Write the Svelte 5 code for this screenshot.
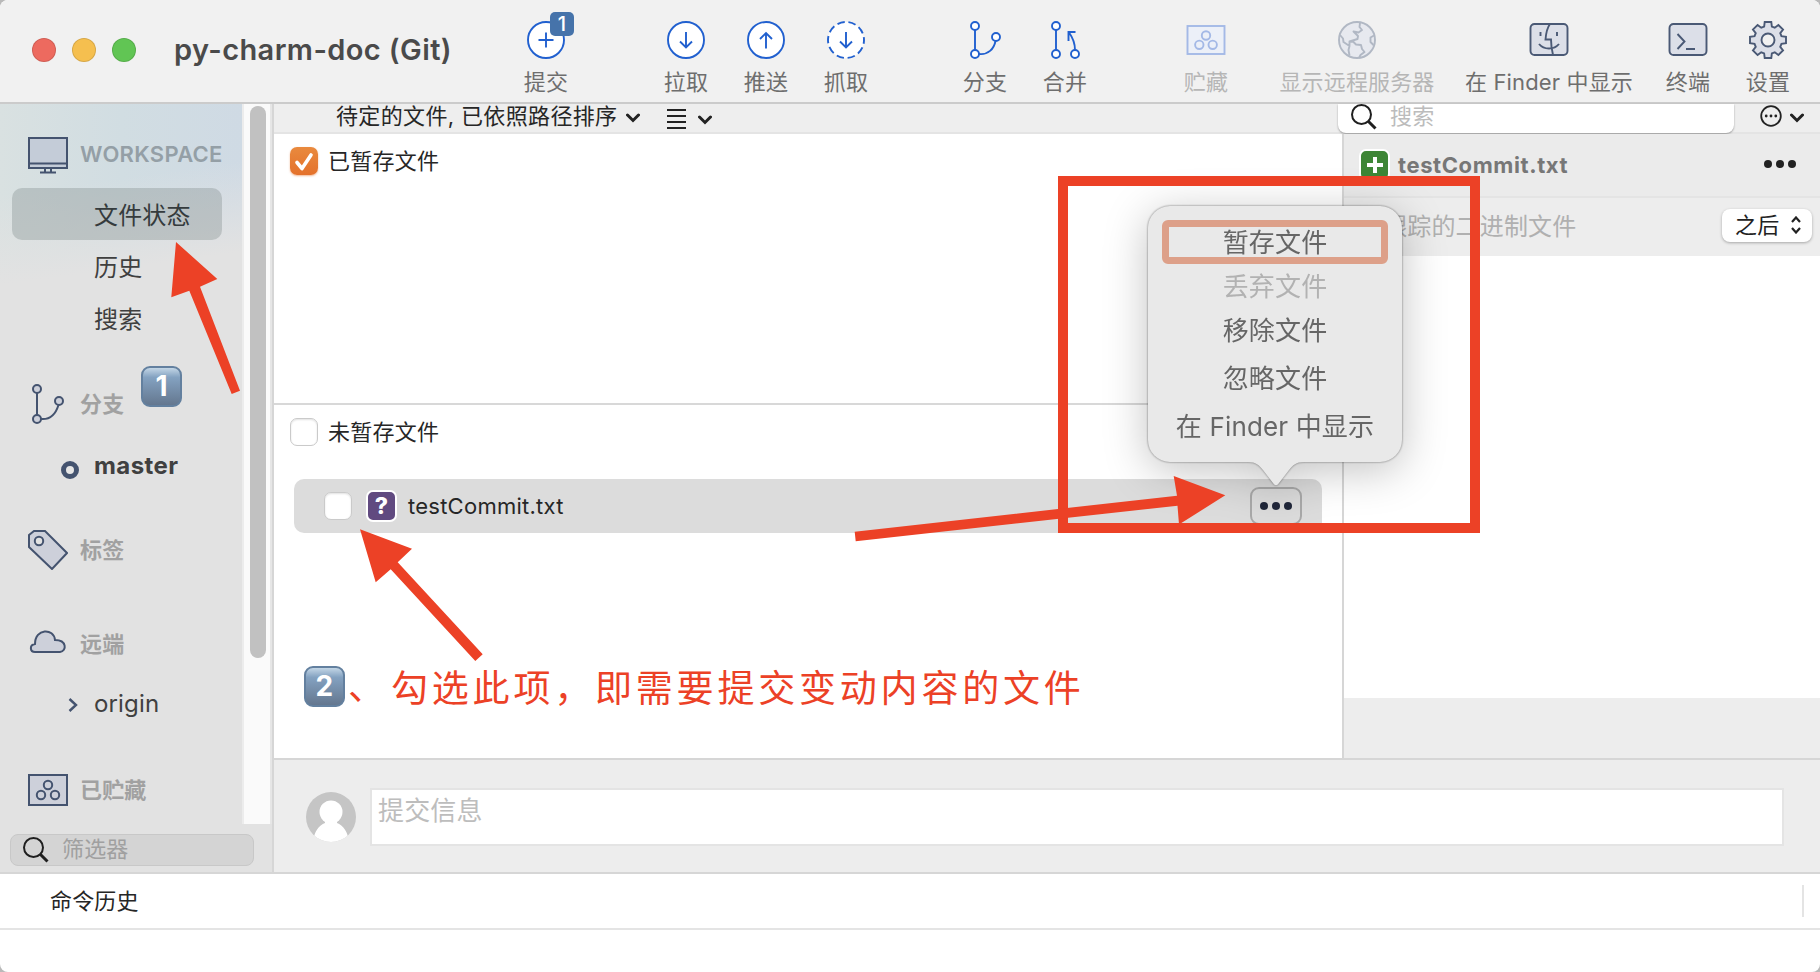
<script lang="ts">
  type Tool = { icon: string; label: string; width: number; disabled?: boolean };

  const toolGroups: { name: string; tools: Tool[] }[] = [
    { name: 'commit', tools: [{ icon: 'commit', label: '提交', width: 80 }] },
    {
      name: 'sync',
      tools: [
        { icon: 'pull', label: '拉取', width: 80 },
        { icon: 'push', label: '推送', width: 80 },
        { icon: 'fetch', label: '抓取', width: 80 }
      ]
    },
    {
      name: 'branching',
      tools: [
        { icon: 'branch', label: '分支', width: 80 },
        { icon: 'merge', label: '合并', width: 80 }
      ]
    },
    { name: 'stash', tools: [{ icon: 'stash', label: '贮藏', width: 80, disabled: true }] },
    {
      name: 'system',
      tools: [
        { icon: 'remote', label: '显示远程服务器', width: 170, disabled: true },
        { icon: 'finder', label: '在 Finder 中显示', width: 214 },
        { icon: 'terminal', label: '终端', width: 64 },
        { icon: 'settings', label: '设置', width: 96 }
      ]
    }
  ];

  const menuItems = ['丢弃文件', '移除文件', '忽略文件', '在 Finder 中显示'];

  let selected = $state('文件状态');
  let stagedChecked = $state(true);

  // Gear outline: eight teeth around the centre of a 40x40 box
  function gearPath() {
    const points: string[] = [];
    for (let i = 0; i < 8; i++) {
      const a = (i * Math.PI) / 4 - Math.PI / 2;
      const tooth = [
        [-0.28, 14],
        [-0.18, 18.3],
        [0.18, 18.3],
        [0.28, 14]
      ];
      for (const [d, r] of tooth) {
        points.push(`${(20 + r * Math.cos(a + d)).toFixed(2)} ${(20 + r * Math.sin(a + d)).toFixed(2)}`);
      }
    }
    return 'M' + points.join('L') + 'Z';
  }
</script>

{#snippet icon(name: string)}
  <svg class="icon {name}" viewBox="0 0 40 40" width="40" height="40">
    {#if name === 'commit'}
      <circle cx="20" cy="20" r="18" />
      <path d="M20 12.500v15M12.500 20h15" />
    {:else if name === 'pull'}
      <circle cx="20" cy="20" r="18" />
      <path d="M20 12v15.500M14 21.500l6 6 6-6" />
    {:else if name === 'push'}
      <circle cx="20" cy="20" r="18" />
      <path d="M20 28.500V13M14 19l6-6 6 6" />
    {:else if name === 'fetch'}
      <circle cx="20" cy="20" r="18" stroke-dasharray="7.500 3.810" stroke-dashoffset="3.700" />
      <path d="M20 12v15.500M14 21.500l6 6 6-6" />
    {:else if name === 'branch'}
      <path d="M10 10v20M14 34c9 1 15-5 16.500-13" />
      <circle cx="10" cy="6" r="4" />
      <circle cx="10" cy="34" r="4" />
      <circle cx="31" cy="17" r="4" />
    {:else if name === 'merge'}
      <path d="M11 10v20M30 30c0-7-2-12-6-17.500M23.500 21v-9h7" />
      <circle cx="11" cy="6" r="4" />
      <circle cx="11" cy="34" r="4" />
      <circle cx="30" cy="34" r="4" />
    {:else if name === 'stash'}
      <rect x="1.500" y="6" width="37" height="28" />
      <circle cx="20" cy="15.500" r="4.200" />
      <circle cx="13.300" cy="24.800" r="4.200" />
      <circle cx="26.700" cy="24.800" r="4.200" />
    {:else if name === 'remote'}
      <circle cx="20" cy="20" r="18" />
      <path d="M23 3l-.5 4 2.500 3-3.500 2.500-5-1 4.500 4.500-.5 3-8 2.500v4M3 15l3 3.500.5 3.500 6 4-1 4 1 5.500M12 22l4-.5 3 3 5 .5 1 4 2.500 3-4 3-1.500 3M37 15.500l-3.500 2 0 4.500 3 3" />
    {:else if name === 'finder'}
      <rect x="1.500" y="4" width="37" height="31" rx="4" />
      <path d="M21 4c-3 4-4 9-4.500 15.500h5.500c0 6 1 11 2 15.500M11.500 12v4M28 12v4M10 24c5 6 15 6 20 0" />
    {:else if name === 'terminal'}
      <rect x="1.500" y="4" width="37" height="31" rx="4" />
      <path d="M9.500 14l7 7.500-7 7.500M18 29h9" />
    {:else if name === 'settings'}
      <path d={gearPath()} />
      <circle cx="20" cy="20" r="6.500" class="hole" />
    {/if}
  </svg>
{/snippet}

{#snippet magnifier()}
  <svg class="magnifier" viewBox="0 0 26 26" width="26" height="26">
    <circle cx="10.500" cy="10.500" r="9.500" />
    <path class="handle" d="M17.500 17.500l7 7" />
  </svg>
{/snippet}

{#snippet chevron()}
  <svg class="chevron" viewBox="0 0 14 10" width="14" height="10"><path d="M1.500 2l5.500 5.500L12.500 2" /></svg>
{/snippet}

{#snippet keycap(n: number)}
  <span class="keycap">{n}</span>
{/snippet}

<div class="window">
  <header class="toolbar">
    <div class="title-area">
      <span class="light red"></span>
      <span class="light yellow"></span>
      <span class="light green"></span>
      <h1>py-charm-doc (Git)</h1>
    </div>
    {#each toolGroups as group}
      <div class="tool-group {group.name}-group">
        {#each group.tools as tool}
          <div class="tool" class:disabled={tool.disabled} style="width: {tool.width}px">
            {@render icon(tool.icon)}
            <span>{tool.label}</span>
            {#if tool.icon === 'commit'}<b class="count">1</b>{/if}
          </div>
        {/each}
      </div>
    {/each}
  </header>

  <div class="body">
    <aside class="sidebar">
      <div class="sidebar-top">
        <nav>
          <div class="heading workspace">
            <svg viewBox="0 0 40 44" width="40" height="44">
              <rect x="1" y="5" width="38" height="30" />
              <path d="M1 30.500h38M17 35v4M23 35v4M12 39.500h16" />
            </svg>
            WORKSPACE
          </div>
          {#each ['文件状态', '历史', '搜索'] as item}
            <button class="nav-item" class:active={selected === item} onclick={() => (selected = item)}>{item}</button>
          {/each}

          <div class="heading branches">
            <svg viewBox="0 0 40 40" width="40" height="40">
              <path class="line" d="M9 9v22M13 35c10 1 15-6 17.500-14" />
              <circle cx="9" cy="5" r="4" />
              <circle cx="9" cy="35" r="4" />
              <circle cx="31" cy="17" r="4" />
            </svg>
            分支
          </div>
          <div class="leaf master"><i class="ring"></i>master</div>

          <div class="heading tags">
            <svg viewBox="0 0 40 40" width="40" height="40">
              <path d="M1 5l5-4h11l22 22-15 16L1 17z" />
              <circle cx="11" cy="11" r="4.200" class="hole" />
            </svg>
            标签
          </div>
          <div class="heading remotes">
            <svg viewBox="0 0 40 40" width="40" height="40">
              <path d="M7 31c-5 0-6-7 0-8 0-16 19-16 20-4 12 0 12 11 5 12z" />
            </svg>
            远端
          </div>
          <div class="leaf origin">
            <svg viewBox="0 0 10 16" width="10" height="16"><path d="M1.500 2l6.500 6-6.500 6" /></svg>origin
          </div>
          <div class="heading stashes">
            <svg viewBox="0 0 40 40" width="40" height="40">
              <rect x="1" y="5" width="38" height="30" />
              <circle cx="20" cy="15" r="4.200" />
              <circle cx="13" cy="25" r="4.200" />
              <circle cx="27" cy="25" r="4.200" />
            </svg>
            已贮藏
          </div>
        </nav>
        <div class="scrollbar"><div class="thumb"></div></div>
      </div>
      <div class="filter">{@render magnifier()}<span>筛选器</span></div>
    </aside>

    <main>
      <div class="sortbar">
        <span class="sort">待定的文件, 已依照路径排序</span>
        {@render chevron()}
        <i class="lines"></i>
        {@render chevron()}
        <div class="search">{@render magnifier()}<span>搜索</span></div>
        <svg class="more-circle" viewBox="0 0 22 22" width="22" height="22">
          <circle cx="11" cy="11" r="9.800" class="outline" />
          <circle cx="6.200" cy="11" r="1.400" />
          <circle cx="11" cy="11" r="1.400" />
          <circle cx="15.800" cy="11" r="1.400" />
        </svg>
        {@render chevron()}
      </div>

      <div class="panes">
        <div class="files">
          <section class="staged">
            <div class="pane-title">
              <button class="check" class:checked={stagedChecked} aria-label="staged" onclick={() => (stagedChecked = !stagedChecked)}>
                {#if stagedChecked}
                  <svg viewBox="0 0 28 28" width="28" height="28"><path d="M7 15.500l5 6L21 8" /></svg>
                {/if}
              </button>
              已暂存文件
            </div>
          </section>
          <section class="unstaged">
            <div class="pane-title"><span class="check"></span>未暂存文件</div>
            <div class="file-row">
              <span class="check"></span>
              <span class="badge unknown">?</span>
              <span class="name">testCommit.txt</span>
              <button class="more" aria-label="more"><i></i><i></i><i></i></button>
            </div>
          </section>
        </div>

        <div class="diff">
          <div class="diff-head">
            <span class="badge added"></span>
            <b>testCommit.txt</b>
            <div class="dots"><i></i><i></i><i></i></div>
          </div>
          <div class="diff-info">
            <span>未跟踪的二进制文件</span>
            <div class="select">
              之后
              <svg viewBox="0 0 10 18" width="10" height="18"><path d="M1 6l4-4.500L9 6M1 12l4 4.500L9 12" /></svg>
            </div>
          </div>
          <div class="diff-body"></div>
          <div class="diff-foot"></div>
        </div>
      </div>

      <div class="commit-bar">
        <svg class="avatar" viewBox="0 0 50 50" width="50" height="50">
          <defs><clipPath id="face"><circle cx="25" cy="25" r="25" /></clipPath></defs>
          <g clip-path="url(#face)">
            <rect width="50" height="50" fill="#c5c5c5" />
            <circle cx="25" cy="20" r="11.500" fill="#fff" />
            <path d="M19 28h12v3c6 2 11 9 12 19H7c1-10 6-17 12-19z" fill="#fff" />
          </g>
        </svg>
        <div class="message">提交信息</div>
      </div>
    </main>
  </div>

  <footer>
    <div class="history">命令历史<i></i></div>
  </footer>

  <!-- File actions popover -->
  <div class="popover">
    <button class="focused">暂存文件</button>
    {#each menuItems as item, i}
      <button disabled={i === 0}>{item}</button>
    {/each}
    <svg class="tail" viewBox="0 0 56 26" width="56" height="26">
      <path d="M0 0v1C8 1 11 4 15 9l10 13c2 3 4 3 6 0L41 9C45 4 48 1 56 1V0z" />
    </svg>
  </div>

  <!-- Hand-drawn notes over the window -->
  <div class="frame"></div>
  <svg class="arrows" viewBox="0 0 1820 972" width="1820" height="972">
    <path d="M176 242l41.300 37-17.300 7.700 40 104-8.300 3.300-42.400-103.300-18 6.600z" />
    <path d="M360 529.300l52 19.400-14.300 13.600 85 92-7.400 6.700-84.600-91.700-15 13z" />
    <path d="M1225.300 495.300l-51.600-19.300 3.300 19.700-322.300 36 1 9.600 321.800-35.600 1.500 18.800z" />
  </svg>
  <div class="note one">{@render keycap(1)}</div>
  <div class="note two">{@render keycap(2)}<span class="comma">、</span><span class="words">勾选此项，即需要提交变动内容的文件</span></div>
</div>

<style>
  :global(body) {
    background: #b9b9b9;
    overflow: hidden;
  }

  * {
    box-sizing: border-box;
  }

  .window {
    position: relative;
    display: flex;
    flex-direction: column;
    width: 1820px;
    height: 972px;
    overflow: hidden;
    border-radius: 8px;
    background: #fff;
    font-family: Inter, "Noto Sans CJK SC", sans-serif;
    font-size: 22px;
    line-height: 1.2;
    letter-spacing: 0.15px;
    color: #262626;
  }

  button {
    font: inherit;
    letter-spacing: inherit;
    color: inherit;
    border: none;
    background: none;
    padding: 0;
  }

  svg {
    display: block;
    flex: none;
    fill: none;
  }

  /* Toolbar */
  .toolbar {
    display: flex;
    height: 104px;
    flex: none;
    background: #f1f1f1;
    border-bottom: 2px solid #cbcbcb;
  }

  .title-area {
    display: flex;
    align-items: center;
    width: 506px;
    padding: 0 0 2px 32px;
    gap: 16px;
  }

  .light {
    width: 24px;
    height: 24px;
    border-radius: 50%;
    border: 1px solid rgba(0, 0, 0, 0.12);
  }

  .red { background: #ed6a5f; }
  .yellow { background: #f5bf4f; }
  .green { background: #61c554; }

  h1 {
    margin: 0 0 0 22px;
    font-size: 29px;
    font-weight: 600;
    letter-spacing: 0.4px;
    color: #4a4a4a;
    white-space: nowrap;
  }

  .tool-group {
    display: flex;
  }

  .sync-group { margin-left: 60px; }
  .branching-group { margin-left: 59px; }
  .stash-group { margin-left: 61px; }
  .system-group { margin-left: 26px; }

  .tool {
    position: relative;
    display: flex;
    flex-direction: column;
    align-items: center;
    padding-top: 20px;
    color: #6e6e6e;
    white-space: nowrap;
  }

  .tool span {
    margin-top: 6px;
    line-height: 32px;
  }

  .tool.disabled span {
    color: #b6b6b6;
  }

  .icon {
    stroke: #2160cf;
    stroke-width: 1.9;
    fill: none;
  }

  .icon circle {
    fill: #fff;
  }

  .icon.stash {
    stroke: #a4b9e6;
  }

  .icon.stash rect,
  .icon.stash circle {
    fill: #ecf0f8;
  }

  .icon.remote {
    stroke: #b1b8c4;
    stroke-linejoin: round;
  }

  .icon.remote circle {
    fill: #e7e9ef;
  }

  .icon.finder,
  .icon.terminal,
  .icon.settings {
    stroke: #4a5975;
  }

  .icon.finder rect,
  .icon.terminal rect,
  .icon.settings path {
    fill: #dcdfe8;
  }

  .icon.settings .hole {
    fill: #f1f1f1;
  }

  .count {
    position: absolute;
    left: 44px;
    top: 12px;
    width: 24px;
    height: 24px;
    border-radius: 5px;
    background: #4673aa;
    color: #fff;
    font-size: 20px;
    font-weight: 500;
    line-height: 24px;
    text-align: center;
  }

  /* Sidebar */
  .body {
    display: flex;
    height: 768px;
    flex: none;
  }

  .sidebar {
    display: flex;
    flex-direction: column;
    width: 274px;
    border-right: 2px solid #d6d6d6;
    background: #e2e2e2;
  }

  .sidebar-top {
    display: flex;
    height: 720px;
  }

  nav {
    width: 242px;
    background:
      linear-gradient(172deg, rgba(226, 226, 226, 0) 90px, #e2e2e2 180px),
      linear-gradient(to right, #d9e1e1, #d1dde2 50%, #cfdae4);
  }

  .heading {
    display: flex;
    align-items: center;
    height: 60px;
    padding-left: 28px;
    gap: 12px;
    font-weight: 700;
    color: #a1a1a1;
  }

  .heading svg {
    stroke: #44536f;
    stroke-width: 2;
    fill: #cdd0da;
  }

  .heading svg .line {
    fill: none;
  }

  .heading svg .hole {
    fill: #e2e2e2;
  }

  .workspace {
    height: 84px;
    padding-top: 17px;
    color: #949fa6;
    font-weight: 600;
    letter-spacing: 0.3px;
  }

  .workspace svg {
    fill: #c4ccd8;
  }

  .nav-item {
    display: block;
    width: 210px;
    height: 52px;
    margin-left: 12px;
    padding: 3px 0 0 82px;
    border-radius: 10px;
    font-size: 24px;
    line-height: 49px;
    text-align: left;
    color: #3f3f3f;
  }

  .nav-item.active {
    background: rgba(130, 140, 140, 0.36);
    color: #353b3d;
  }

  .branches { margin-top: 30px; }

  .leaf {
    display: flex;
    align-items: center;
    height: 52px;
    padding-bottom: 3px;
    font-size: 24px;
    color: #404040;
  }

  .master {
    margin-top: 8px;
    padding-left: 61px;
    gap: 15px;
    font-weight: 700;
    letter-spacing: 0.4px;
  }

  .ring {
    width: 18px;
    height: 18px;
    margin-top: 6px;
    border: 5px solid #44536f;
    border-radius: 50%;
    background: #e6e6e6;
  }

  .tags { margin-top: 26px; }
  .remotes { margin-top: 34px; }

  .remotes svg {
    margin-top: -6px;
  }

  .origin {
    margin-top: 6px;
    padding-left: 68px;
    gap: 16px;
  }

  .origin svg {
    stroke: #44536f;
    stroke-width: 2.4;
  }

  .stashes { margin-top: 28px; }

  .scrollbar {
    width: 30px;
    padding: 2px 0 0 6px;
    background: #fafafa;
    border-left: 2px solid #ececec;
    border-right: 2px solid #e6e6e6;
  }

  .thumb {
    width: 16px;
    height: 552px;
    border-radius: 8px;
    background: #c1c1c1;
  }

  .magnifier {
    stroke: #1f1f1f;
    stroke-width: 2;
  }

  .magnifier .handle {
    stroke-width: 3;
  }

  .filter {
    display: flex;
    align-items: center;
    width: 244px;
    height: 32px;
    margin: 10px 0 0 10px;
    padding: 0 0 1px 12px;
    gap: 13px;
    border: 1px solid #c8c8c8;
    border-radius: 8px;
    background: #d4d4d4;
    color: #a0a0a0;
  }

  /* Main area */
  main {
    display: flex;
    flex-direction: column;
    width: 1546px;
  }

  .sortbar {
    display: flex;
    align-items: center;
    height: 30px;
    padding-left: 62px;
    background: #eee;
    border-bottom: 2px solid #e4e4e4;
    white-space: nowrap;
  }

  .sort {
    width: 290px;
    line-height: 26px;
    margin-top: -4px;
    letter-spacing: 0.35px;
  }

  .chevron {
    stroke: #222;
    stroke-width: 3;
    stroke-linecap: round;
  }

  .lines {
    width: 19px;
    height: 20px;
    margin: 2px 12px 0 27px;
    background: repeating-linear-gradient(#222 0 2px, transparent 2px 6px);
  }

  .lines + .chevron {
    margin-top: 4px;
  }

  .search {
    display: flex;
    align-items: center;
    width: 396px;
    height: 29px;
    margin-left: 626px;
    padding: 0 0 3px 13px;
    gap: 13px;
    border-radius: 0 0 8px 8px;
    background: #fff;
    box-shadow: 0 1px 2px rgba(0, 0, 0, 0.35);
    color: #bcbcbc;
  }

  .more-circle {
    margin: -4px 8px 0 26px;
    fill: #222;
  }

  .more-circle .outline {
    fill: none;
    stroke: #222;
    stroke-width: 1.8;
  }

  .panes {
    display: flex;
    height: 624px;
  }

  .files {
    width: 1070px;
    border-right: 2px solid #d6d6d6;
  }

  .staged {
    height: 271px;
    padding-top: 13px;
    border-bottom: 2px solid #d8d8d8;
  }

  .unstaged {
    padding-top: 13px;
  }

  .pane-title {
    display: flex;
    align-items: center;
    height: 28px;
    padding-left: 16px;
    gap: 10px;
    letter-spacing: 0.25px;
  }

  .check {
    width: 28px;
    height: 28px;
    flex: none;
    border: 1px solid #cacaca;
    border-radius: 7px;
    background: #fff;
    box-shadow: inset 0 1px 2px rgba(0, 0, 0, 0.12);
  }

  .check.checked {
    border: none;
    background: linear-gradient(#e98a3e, #e4712b);
    box-shadow: 0 1px 2px rgba(228, 113, 43, 0.5);
  }

  .check.checked svg {
    stroke: #fff;
    stroke-width: 3.6;
    stroke-linecap: round;
    stroke-linejoin: round;
  }

  .file-row {
    display: flex;
    align-items: center;
    width: 1028px;
    height: 54px;
    margin: 33px 0 0 20px;
    padding-left: 30px;
    border-radius: 10px;
    background: #dcdcdc;
  }

  .badge {
    width: 31px;
    height: 32px;
    flex: none;
    border: 2px solid #fff;
    border-radius: 7px;
    color: #fff;
    font-size: 23px;
    font-weight: 800;
    line-height: 28px;
    text-align: center;
  }

  .unknown {
    margin: 0 11px 0 14px;
    background: #614a80;
  }

  .name {
    width: 842px;
    letter-spacing: 0.25px;
  }

  .more {
    display: flex;
    align-items: center;
    justify-content: center;
    gap: 4px;
    width: 52px;
    height: 38px;
    border: 2px solid #a9a9a9;
    border-radius: 9px;
  }

  .more i,
  .dots i {
    width: 8px;
    height: 8px;
    border-radius: 50%;
    background: #20273a;
  }

  .diff {
    display: flex;
    flex-direction: column;
    flex: 1;
  }

  .diff-head {
    display: flex;
    align-items: center;
    height: 64px;
    padding: 0 24px 0 15px;
    background: #ebebeb;
    border-bottom: 2px solid #e4e4e4;
    color: #777;
  }

  .diff-head b {
    flex: 1;
    margin: 1px 0 0 8px;
    font-weight: 700;
    letter-spacing: 0.6px;
  }

  .added {
    background:
      linear-gradient(#fff, #fff) center / 16px 4px no-repeat,
      linear-gradient(#fff, #fff) center / 4px 16px no-repeat,
      #3e8636;
  }

  .dots {
    display: flex;
    gap: 4px;
    margin-top: -3px;
  }

  .dots i {
    background: #222;
  }

  .diff-info {
    display: flex;
    align-items: center;
    justify-content: space-between;
    height: 58px;
    padding: 0 8px 0 15px;
    background: #ededed;
    color: #b0b0b0;
    font-size: 24px;
  }

  .select {
    display: flex;
    align-items: center;
    justify-content: space-between;
    width: 90px;
    height: 33px;
    margin-top: -4px;
    padding: 0 11px 0 13px;
    border-radius: 8px;
    background: #fff;
    box-shadow: 0 1px 3px rgba(0, 0, 0, 0.3);
    color: #222;
    font-size: 22px;
  }

  .select svg {
    stroke: #222;
    stroke-width: 2.2;
  }

  .diff-body {
    flex: 1;
    background: #fff;
  }

  .diff-foot {
    height: 60px;
    background: #ededed;
  }

  .commit-bar {
    display: flex;
    height: 114px;
    padding: 28px 36px 0 32px;
    gap: 14px;
    background: #ededed;
    border-top: 2px solid #d6d6d6;
  }

  .avatar {
    margin-top: 4px;
  }

  .message {
    flex: 1;
    height: 58px;
    padding-left: 6px;
    border: 2px solid #e4e4e4;
    background: #fff;
    color: #bdbdbd;
    font-size: 26px;
    line-height: 41px;
  }

  .history {
    display: flex;
    align-items: center;
    justify-content: space-between;
    height: 58px;
    padding: 0 16px 0 50px;
    border-top: 2px solid #d6d6d6;
    border-bottom: 2px solid #e4e4e4;
  }

  .history i {
    width: 2px;
    height: 32px;
    background: #e4e4e4;
  }

  /* Popover */
  .popover {
    position: absolute;
    left: 1148px;
    top: 206px;
    display: flex;
    flex-direction: column;
    align-items: center;
    width: 254px;
    height: 256px;
    padding-top: 14px;
    border-radius: 22px;
    background: #e9e9e9;
    filter: drop-shadow(0 0 1px rgba(0, 0, 0, 0.5)) drop-shadow(0 8px 22px rgba(0, 0, 0, 0.24));
    color: #666;
    font-size: 26px;
  }

  .popover button {
    height: 48px;
    line-height: 46px;
    padding-bottom: 2px;
    white-space: nowrap;
  }

  .popover button:disabled {
    height: 44px;
    padding: 2px 0 0;
    line-height: 42px;
    color: #b2b2b2;
  }

  .popover .focused {
    width: 226px;
    height: 44px;
    padding: 2px 0 0;
    border: 7px solid #dda089;
    border-radius: 6px;
    line-height: 28px;
  }

  .tail {
    position: absolute;
    left: 100px;
    top: 255px;
    fill: #e9e9e9;
  }

  /* Annotations */
  .frame {
    position: absolute;
    left: 1058px;
    top: 176px;
    width: 422px;
    height: 357px;
    border: 10px solid #ec4126;
  }

  .arrows {
    position: absolute;
    left: 0;
    top: 0;
    fill: #ec4126;
    pointer-events: none;
  }

  .note {
    position: absolute;
    display: flex;
    align-items: center;
    height: 41px;
    color: #ec4126;
    font-family: STKaiti, KaiTi, "Noto Sans CJK SC", serif;
    font-size: 37px;
    white-space: nowrap;
  }

  .one {
    left: 141px;
    top: 366px;
  }

  .two {
    left: 304px;
    top: 666px;
  }

  .comma {
    width: 43px;
    margin: -4px 0 0 3px;
  }

  .words {
    letter-spacing: 3.8px;
  }

  .keycap {
    width: 41px;
    height: 41px;
    border: 2px solid #63809f;
    border-radius: 9px;
    background: linear-gradient(#c3d6e6, #84a2c1 25%, #64778f);
    color: #fff;
    font: 700 28px/36px Inter, sans-serif;
    text-align: center;
  }
</style>
